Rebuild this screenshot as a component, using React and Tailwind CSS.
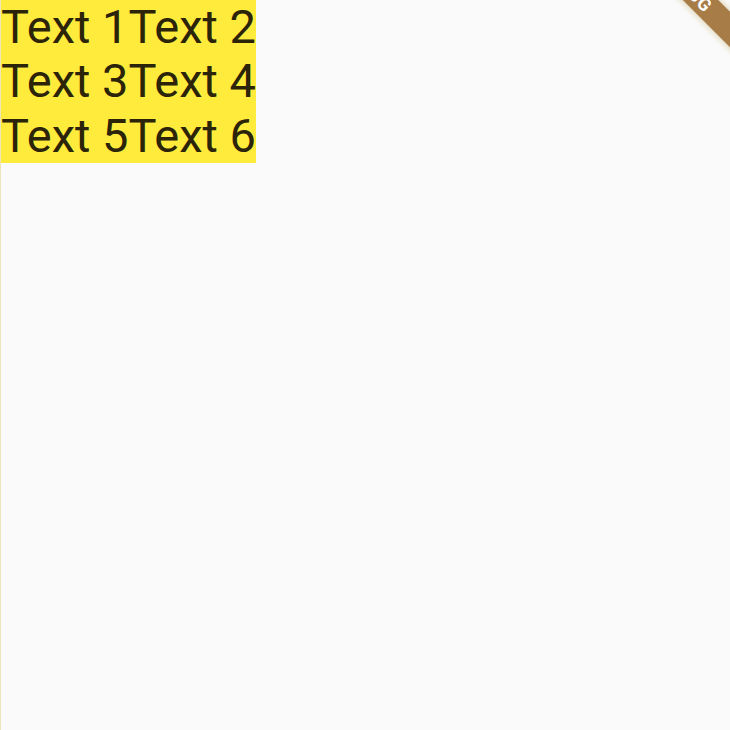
export default function App() {
  const rows = [
    ['Text 1', 'Text 2'],
    ['Text 3', 'Text 4'],
    ['Text 5', 'Text 6'],
  ];

  return (
    <div className="relative w-[730px] h-[730px] bg-[#fafafa] overflow-hidden border-l border-[#ece5b8] font-['Roboto',sans-serif]">
      <div className="inline-flex flex-col bg-[#ffeb3b] text-[#2b2408]">
        {rows.map((row) => (
          <div key={row[0]} className="flex">
            {row.map((t) => (
              <span key={t} className="text-[47px] leading-[54.3px] whitespace-pre">{t}</span>
            ))}
          </div>
        ))}
      </div>

      {/* debug banner */}
      <div className="absolute left-[537px] top-[-25.5px] w-[300px] h-[25px] rotate-45 bg-[#a87c47] flex items-center justify-center shadow-[0_0_5px_2px_rgba(200,180,120,0.45)]">
        <span className="text-white text-[18px] font-bold tracking-wide leading-none">DEBUG</span>
      </div>
    </div>
  );
}
